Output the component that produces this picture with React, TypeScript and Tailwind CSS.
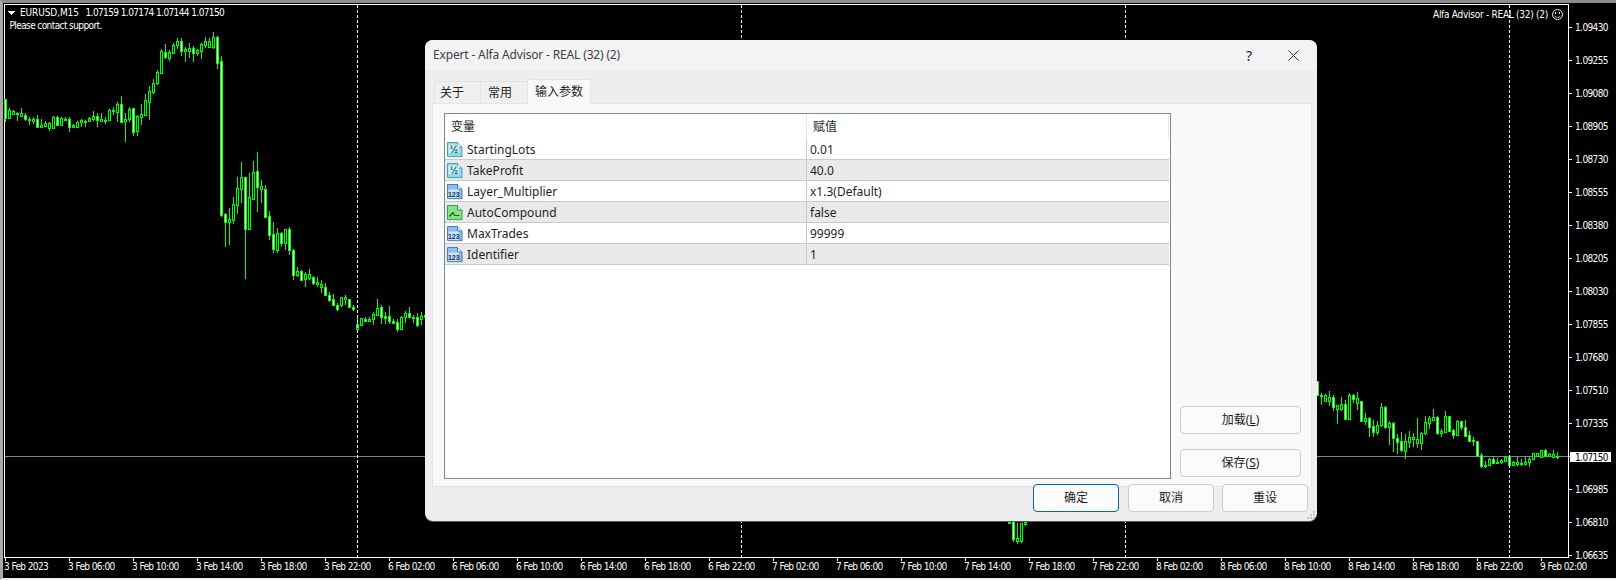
import type { ReactNode } from "react";

// [high, bodyTop, bodyBottom, low, filled] in zoomed pixels (3x), one candle every 4px
type Candle = [number, number, number, number, number];

const LEFT_CANDLES: Candle[] = [
  [297, 297, 355, 365, 1], [325, 330, 355, 358, 0], [330, 332, 342, 345, 0], [336, 338, 341, 362, 0],
  [324, 340, 347, 350, 0], [340, 346, 358, 362, 1], [350, 358, 361, 375, 0], [352, 358, 362, 372, 0],
  [346, 358, 380, 380, 1], [358, 376, 380, 380, 0], [362, 370, 377, 378, 0], [365, 370, 384, 392, 0],
  [348, 352, 384, 386, 0], [348, 352, 375, 378, 1], [352, 354, 375, 378, 0], [350, 357, 359, 360, 0],
  [352, 358, 380, 395, 1], [372, 376, 381, 384, 0], [364, 366, 380, 381, 0], [357, 360, 365, 380, 0],
  [360, 362, 365, 380, 0], [350, 354, 362, 365, 0], [333, 349, 356, 362, 0], [340, 349, 360, 380, 1],
  [338, 358, 362, 362, 0], [350, 360, 362, 372, 0], [326, 330, 360, 364, 0], [322, 330, 334, 345, 0],
  [305, 312, 335, 365, 0], [288, 312, 365, 365, 1], [340, 358, 364, 425, 0], [320, 328, 356, 365, 0],
  [325, 325, 395, 408, 1], [344, 348, 394, 408, 0], [312, 343, 350, 375, 0], [282, 300, 344, 346, 0],
  [258, 274, 305, 360, 0], [238, 250, 276, 282, 0], [210, 216, 248, 254, 0], [148, 153, 218, 218, 0],
  [132, 155, 172, 178, 1], [150, 156, 174, 182, 0], [130, 136, 158, 160, 0], [114, 124, 134, 148, 0],
  [114, 124, 152, 168, 1], [140, 148, 152, 185, 0], [128, 145, 152, 175, 0], [138, 145, 158, 185, 1],
  [146, 150, 158, 168, 0], [128, 132, 152, 178, 0], [112, 124, 136, 145, 0], [115, 124, 140, 142, 0],
  [97, 112, 140, 146, 0], [108, 112, 188, 206, 1], [168, 184, 645, 652, 1], [638, 643, 665, 740, 1],
  [624, 658, 665, 735, 0], [590, 612, 660, 672, 0], [530, 565, 614, 642, 0], [486, 530, 566, 610, 0],
  [532, 532, 688, 836, 1], [520, 592, 686, 690, 0], [484, 516, 596, 600, 0], [456, 514, 560, 635, 1],
  [540, 558, 568, 610, 0], [554, 568, 650, 655, 1], [632, 648, 704, 720, 1], [665, 702, 748, 760, 1],
  [685, 700, 750, 760, 0], [695, 700, 730, 740, 1], [686, 688, 730, 750, 0], [680, 688, 750, 765, 1],
  [748, 750, 824, 840, 1], [800, 812, 824, 830, 0], [810, 812, 840, 842, 1], [815, 822, 838, 860, 0],
  [808, 823, 834, 840, 0], [828, 832, 848, 855, 1], [830, 846, 851, 862, 0], [840, 852, 862, 880, 0],
  [850, 862, 886, 888, 1], [876, 886, 900, 905, 1], [882, 898, 914, 918, 1], [908, 914, 928, 932, 1],
  [890, 892, 916, 920, 0], [884, 890, 898, 915, 0], [896, 898, 920, 924, 1], [916, 920, 928, 932, 1],
  [948, 972, 988, 998, 0], [953, 955, 974, 976, 0], [952, 956, 962, 966, 1], [950, 956, 962, 966, 0],
  [935, 942, 956, 976, 0], [897, 925, 946, 948, 0], [915, 922, 952, 972, 1], [935, 948, 953, 972, 1],
  [918, 948, 964, 972, 1], [958, 964, 968, 972, 1], [958, 966, 986, 995, 1], [948, 952, 986, 988, 0],
  [932, 940, 952, 970, 0], [922, 940, 950, 955, 1], [945, 950, 952, 970, 0], [938, 952, 974, 980, 1],
  [935, 948, 958, 975, 0], [940, 946, 952, 965, 0],
];

const RIGHT_CANDLES: Candle[] = [
  [32, 32, 76, 76, 1], [70, 76, 77, 104, 0], [72, 76, 92, 95, 0], [63, 82, 93, 108, 0],
  [75, 82, 110, 122, 1], [106, 106, 116, 162, 0], [82, 102, 118, 122, 0], [90, 102, 148, 148, 1],
  [70, 76, 148, 148, 0], [72, 76, 86, 100, 1], [66, 85, 98, 120, 0], [94, 94, 154, 156, 1],
  [128, 145, 154, 166, 0], [140, 145, 170, 200, 1], [150, 168, 185, 200, 1], [152, 166, 186, 196, 0],
  [98, 112, 166, 170, 0], [108, 112, 172, 176, 1], [154, 160, 172, 225, 0], [156, 160, 205, 245, 1],
  [192, 205, 215, 253, 1], [186, 214, 240, 245, 1], [192, 214, 242, 268, 0], [184, 202, 216, 234, 0],
  [188, 202, 206, 232, 0], [144, 208, 220, 235, 0], [186, 190, 220, 240, 0], [138, 156, 190, 194, 0],
  [138, 145, 158, 176, 0], [117, 142, 150, 152, 0], [138, 142, 190, 196, 1], [178, 184, 190, 200, 0],
  [124, 138, 186, 190, 0], [138, 138, 182, 184, 1], [176, 180, 196, 208, 1], [150, 154, 194, 198, 0],
  [152, 154, 172, 180, 1], [150, 172, 197, 202, 1], [184, 196, 212, 216, 1], [200, 210, 214, 228, 0],
  [212, 214, 258, 260, 1], [250, 256, 288, 294, 1], [272, 286, 288, 294, 0], [264, 268, 284, 288, 0],
  [262, 268, 280, 282, 1], [264, 277, 280, 282, 0], [266, 270, 276, 282, 0], [258, 260, 272, 272, 0],
  [255, 260, 284, 286, 1], [272, 275, 284, 288, 0], [260, 275, 282, 288, 0], [266, 279, 281, 288, 0],
  [260, 275, 282, 284, 0], [262, 268, 275, 290, 0], [250, 250, 268, 270, 0], [248, 250, 258, 260, 0],
  [241, 241, 260, 262, 0], [238, 241, 258, 260, 1], [250, 252, 258, 260, 0], [240, 252, 260, 264, 0],
  [247, 257, 258, 268, 0],
];

const BOTTOM_CANDLES: Candle[] = [
  [96, 97, 98, 100, 0], [94, 94, 146, 155, 1], [100, 145, 152, 162, 0], [100, 100, 152, 160, 0], [94, 95, 102, 108, 0],
];

const PRICES = [
  "1.09430", "1.09255", "1.09080", "1.08905", "1.08730", "1.08555", "1.08380", "1.08205", "1.08030",
  "1.07855", "1.07680", "1.07510", "1.07335", "", "1.06985", "1.06810", "1.06635",
];

const TIMES = [
  "3 Feb 2023", "3 Feb 06:00", "3 Feb 10:00", "3 Feb 14:00", "3 Feb 18:00", "3 Feb 22:00",
  "6 Feb 02:00", "6 Feb 06:00", "6 Feb 10:00", "6 Feb 14:00", "6 Feb 18:00", "6 Feb 22:00",
  "7 Feb 02:00", "7 Feb 06:00", "7 Feb 10:00", "7 Feb 14:00", "7 Feb 18:00", "7 Feb 22:00",
  "8 Feb 02:00", "8 Feb 06:00", "8 Feb 10:00", "8 Feb 14:00", "8 Feb 18:00", "8 Feb 22:00",
  "9 Feb 02:00",
];

const DAY_LINES = [357, 741, 1125, 1509];

function CandleGroup({ data, startX, offsetY }: { data: Candle[]; startX: number; offsetY: number }) {
  return (
    <g>
      {data.map(([hi, top, bot, lo, filled], i) => {
        const x = startX + i * 4;
        const yHi = Math.round(offsetY + hi / 3);
        const yTop = Math.round(offsetY + top / 3);
        const yBot = Math.max(Math.round(offsetY + bot / 3), yTop + 1);
        const yLo = Math.round(offsetY + lo / 3);
        const h = yBot - yTop + 1;
        return (
          <g key={i}>
            <rect x={x} y={yHi} width={1} height={Math.max(yLo - yHi, 1)} fill="#00ff00" />
            <rect x={x - 1} y={yTop} width={3} height={h} fill="#00ff00" />
            {h > 2 && <rect x={x} y={yTop + 1} width={1} height={h - 2} fill={filled ? "#ffffff" : "#000000"} />}
          </g>
        );
      })}
    </g>
  );
}

function Chart() {
  return (
    <svg
      width={1613}
      height={575}
      viewBox="3 3 1613 575"
      shapeRendering="crispEdges"
      className="block font-['DejaVu_Sans_Condensed','Liberation_Sans',sans-serif] text-[10px] tracking-[-0.6px]"
    >
      {/* plot frame */}
      <rect x={4} y={4} width={1564} height={1} fill="#ffffff" />
      <rect x={4} y={4} width={1} height={553} fill="#ffffff" />
      <rect x={1568} y={4} width={1} height={553} fill="#ffffff" />
      <rect x={4} y={557} width={1565} height={1} fill="#ffffff" />

      <rect x={5} y={456} width={1563} height={1} fill="#778899" />

      <CandleGroup data={LEFT_CANDLES} startX={5} offsetY={0} />
      <CandleGroup data={RIGHT_CANDLES} startX={1317} offsetY={370} />
      <CandleGroup data={BOTTOM_CANDLES} startX={1009} offsetY={490} />

      {DAY_LINES.map((x) => (
        <line key={x} x1={x + 0.5} x2={x + 0.5} y1={5} y2={557} stroke="#ffffff" strokeDasharray="3 2" />
      ))}

      {/* price axis */}
      {PRICES.map((p, i) => (
        <g key={i}>
          <rect x={1569} y={27 + i * 33} width={3} height={1} fill="#ffffff" />
          {p && (
            <text x={1575} y={31 + i * 33} fill="#ffffff" shapeRendering="auto">
              {p}
            </text>
          )}
        </g>
      ))}
      <rect x={1570} y={452} width={41} height={10} fill="#ffffff" />
      <text x={1575} y={461} fill="#000000" shapeRendering="auto">
        1.07150
      </text>

      {/* time axis */}
      {TIMES.map((t, i) => (
        <g key={t}>
          <rect x={5 + i * 64} y={558} width={1} height={3} fill="#ffffff" />
          <text x={4 + i * 64} y={570} fill="#ffffff">
            {t}
          </text>
        </g>
      ))}

      {/* top-left info */}
      <polygon points="8,11 15,11 11.5,15" fill="#ffffff" />
      <text x={20} y={16} fill="#ffffff" className="tracking-[-0.1px]">
        EURUSD,M15
      </text>
      <text x={85.5} y={16} fill="#ffffff">
        1.07159 1.07174 1.07144 1.07150
      </text>
      <text x={9.5} y={29} fill="#ffffff">
        Please contact support.
      </text>

      {/* expert label + smiley */}
      <text x={1433} y={18} fill="#ffffff" className="tracking-[-0.27px]">
        Alfa Advisor - REAL (32) (2)
      </text>
      <g fill="none" stroke="#ffffff" shapeRendering="auto">
        <circle cx={1557.5} cy={14.5} r={5} strokeWidth={0.9} />
        <path d="M1554.7 15.8c1 2.2 4.6 2.2 5.6 0" strokeWidth={0.8} />
      </g>
      <rect x={1555} y={12} width={1} height={2} fill="#ffffff" />
      <rect x={1559} y={12} width={1} height={2} fill="#ffffff" />
    </svg>
  );
}

type IconKind = "frac" | "int" | "bool";

const ICON_COLORS: Record<IconKind, { fill: string; stroke: string; text: string }> = {
  frac: { fill: "#8fd9e8", stroke: "#4a9fb2", text: "#15586a" },
  int: { fill: "#8fbdea", stroke: "#4a7db5", text: "#10356a" },
  bool: { fill: "#86e486", stroke: "#37a04a", text: "#17601f" },
};

function ParamIcon({ kind }: { kind: IconKind }) {
  const c = ICON_COLORS[kind];
  return (
    <svg width={16} height={16} viewBox="0 0 16 16" className="shrink-0">
      <path
        d="M.5.5h10l4.5 4.5v10l-2-.8-2 .8-2-.8-2 .8-2-.8-2 .8-2-.8-.5.2z"
        fill={c.fill}
        stroke={c.stroke}
      />
      <path d="M10.5.5v4.5H15" fill="#e6f6fa" stroke={c.stroke} />
      {kind === "bool" ? (
        <path d="M2.5 11.5l3.5-4 1.5 3h5" fill="none" stroke="#15602a" strokeWidth={1.2} />
      ) : (
        <>
          <rect x={1.5} y={kind === "int" ? 5.5 : 2.5} width={10.5} height={8.5} fill="#ffffff" fillOpacity={0.55} />
          <text
            x={6.8}
            y={kind === "int" ? 12.5 : 10.5}
            textAnchor="middle"
            fontSize={kind === "int" ? 7 : 10}
            fontWeight={700}
            fill={c.text}
            className="font-['Liberation_Sans',sans-serif]"
          >
            {kind === "int" ? "123" : "½"}
          </text>
        </>
      )}
    </svg>
  );
}

const PARAMS: { name: string; value: string; kind: IconKind }[] = [
  { name: "StartingLots", value: "0.01", kind: "frac" },
  { name: "TakeProfit", value: "40.0", kind: "frac" },
  { name: "Layer_Multiplier", value: "x1.3(Default)", kind: "int" },
  { name: "AutoCompound", value: "false", kind: "bool" },
  { name: "MaxTrades", value: "99999", kind: "int" },
  { name: "Identifier", value: "1", kind: "int" },
];

function DlgButton({ children, primary, className }: { children: ReactNode; primary?: boolean; className?: string }) {
  return (
    <button
      className={`flex h-7 items-center justify-center rounded-[4px] border bg-[#fbfbfb] text-[12px] text-[#1a1a1a] ${
        primary ? "border-[#0067c0]" : "border-[#cccccc]"
      } ${className ?? ""}`}
    >
      {children}
    </button>
  );
}

function Dialog() {
  return (
    <div className="absolute left-[425px] top-[40px] flex h-[481px] w-[892px] flex-col overflow-hidden rounded-lg bg-[#eeeeee] font-['Noto_Sans','Noto_Sans_CJK_SC',sans-serif] text-[12px] text-[#1f1f1f] shadow-[0_1px_0_#555555]">
      {/* title bar */}
      <div className="flex h-[30px] shrink-0 items-center bg-[#f3f2f5] pl-2">
        <span className="tracking-[-0.16px] text-[#404040]">Expert - Alfa Advisor - REAL (32) (2)</span>
        <span className="ml-auto mr-[36px] text-[14px] text-[#222222]">?</span>
        <svg width={11} height={11} viewBox="0 0 11 11" className="mr-[18px]">
          <path d="M.5.5l10 10M10.5.5l-10 10" stroke="#333333" fill="none" />
        </svg>
      </div>

      {/* tabs */}
      <div className="flex h-[33px] shrink-0 items-end pl-[9px]">
        <div className="flex h-[22px] w-[47px] items-center border border-b-0 border-[#e3e3e3] bg-[#efefef] pl-[5px]">
          关于
        </div>
        <div className="flex h-[22px] w-[47px] items-center border border-b-0 border-l-0 border-[#e3e3e3] bg-[#efefef] pl-[7px]">
          常用
        </div>
        <div className="relative z-10 -mb-px flex h-[25px] w-[63px] items-center justify-center rounded-t-[2px] border border-b-0 border-l-0 border-[#e3e3e3] bg-[#f9f9f9] pb-px">
          输入参数
        </div>
      </div>

      {/* panel */}
      <div className="ml-[7px] mr-[5px] flex h-[384px] shrink-0 border border-[#e4e4e4] bg-[#f9f9f9] pl-[11px] pt-[9px]">
        <div className="flex h-[366px] w-[727px] flex-col border border-[#7c8894] bg-white pr-px">
          <div className="flex h-[25px] shrink-0">
            <div className="flex w-[362px] items-center border-r border-[#e9e9e9] pl-[6px] pt-px">变量</div>
            <div className="flex flex-1 items-center border-r border-[#e9e9e9] pl-[6px] pt-px">赋值</div>
          </div>
          {PARAMS.map((p, i) => (
            <div
              key={p.name}
              className={`flex h-[21px] shrink-0 border-b border-[#c9c9c9] pt-px ${i % 2 === 1 ? "bg-[#e9e9e9]" : "bg-white"}`}
            >
              <div className="-mt-px flex w-[362px] items-center gap-1 border-r border-[#c9c9c9] pl-[2px] pt-px">
                <ParamIcon kind={p.kind} />
                <span>{p.name}</span>
              </div>
              <div className="flex flex-1 items-center pl-[3px]">{p.value}</div>
            </div>
          ))}
        </div>
        <div className="ml-[9px] flex h-[364px] w-[121px] flex-col justify-end gap-[15px]">
          <DlgButton className="w-full">
            加载(<u>L</u>)
          </DlgButton>
          <DlgButton className="w-full">
            保存(<u>S</u>)
          </DlgButton>
        </div>
      </div>

      {/* footer buttons */}
      <div className="relative -mt-[3px] flex justify-end pr-[9px]">
        <DlgButton primary className="mr-[9px] w-[86px]">
          确定
        </DlgButton>
        <DlgButton className="mr-2 w-[86px]">取消</DlgButton>
        <DlgButton className="w-[86px]">重设</DlgButton>
      </div>

      {/* resize grip */}
      <svg width={8} height={8} viewBox="0 0 8 8" className="absolute bottom-[2px] right-[2px]" fill="#c4c4c4">
        <rect x={6} y={0} width={2} height={2} />
        <rect x={3} y={3} width={2} height={2} />
        <rect x={6} y={3} width={2} height={2} />
        <rect x={0} y={6} width={2} height={2} />
        <rect x={3} y={6} width={2} height={2} />
        <rect x={6} y={6} width={2} height={2} />
      </svg>
    </div>
  );
}

export default function App() {
  return (
    <div className="relative h-[580px] w-[1616px] overflow-hidden bg-black">
      <div className="h-full border-b-2 border-l-[3px] border-t-[3px] border-b-[#f0f0f0] border-l-[#a8a8a8] border-t-[#8c8c8c]">
        <Chart />
      </div>
      <Dialog />
    </div>
  );
}
